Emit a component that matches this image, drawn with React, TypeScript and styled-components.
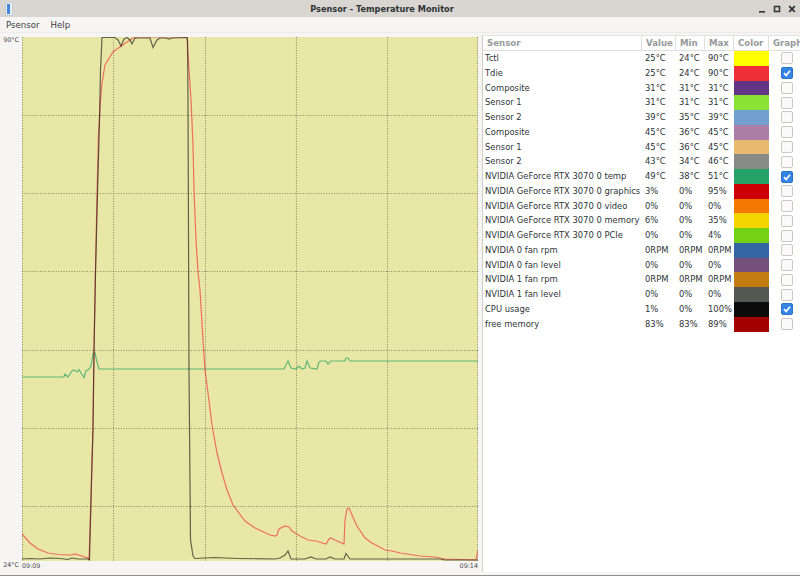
import React from "react";
import styled, { createGlobalStyle } from "styled-components";

const GlobalStyle = createGlobalStyle`
  html, body {
    margin: 0;
    padding: 0;
    background: #f6f5f4;
  }
  body {
    font-family: "DejaVu Sans", sans-serif;
    color: #2e3436;
    overflow: hidden;
  }
`;

interface Sensor {
  name: string;
  value: string;
  min: string;
  max: string;
  color: string;
  graph?: boolean;
}

const sensors: Sensor[] = [
  { name: "Tctl", value: "25°C", min: "24°C", max: "90°C", color: "#ffff00" },
  { name: "Tdie", value: "25°C", min: "24°C", max: "90°C", color: "#f03038", graph: true },
  { name: "Composite", value: "31°C", min: "31°C", max: "31°C", color: "#613583" },
  { name: "Sensor 1", value: "31°C", min: "31°C", max: "31°C", color: "#8ae234" },
  { name: "Sensor 2", value: "39°C", min: "35°C", max: "39°C", color: "#729fcf" },
  { name: "Composite", value: "45°C", min: "36°C", max: "45°C", color: "#ad7fa8" },
  { name: "Sensor 1", value: "45°C", min: "36°C", max: "45°C", color: "#e9b96e" },
  { name: "Sensor 2", value: "43°C", min: "34°C", max: "46°C", color: "#888a85" },
  { name: "NVIDIA GeForce RTX 3070 0 temp", value: "49°C", min: "38°C", max: "51°C", color: "#26a269", graph: true },
  { name: "NVIDIA GeForce RTX 3070 0 graphics", value: "3%", min: "0%", max: "95%", color: "#cc0000" },
  { name: "NVIDIA GeForce RTX 3070 0 video", value: "0%", min: "0%", max: "0%", color: "#f57900" },
  { name: "NVIDIA GeForce RTX 3070 0 memory", value: "6%", min: "0%", max: "35%", color: "#f5d400" },
  { name: "NVIDIA GeForce RTX 3070 0 PCIe", value: "0%", min: "0%", max: "4%", color: "#73d216" },
  { name: "NVIDIA 0 fan rpm", value: "0RPM", min: "0RPM", max: "0RPM", color: "#3465a4" },
  { name: "NVIDIA 0 fan level", value: "0%", min: "0%", max: "0%", color: "#75507b" },
  { name: "NVIDIA 1 fan rpm", value: "0RPM", min: "0RPM", max: "0RPM", color: "#c17d11" },
  { name: "NVIDIA 1 fan level", value: "0%", min: "0%", max: "0%", color: "#555753" },
  { name: "CPU usage", value: "1%", min: "0%", max: "100%", color: "#0b0b0b", graph: true },
  { name: "free memory", value: "83%", min: "83%", max: "89%", color: "#a40000" },
];

const verticals = [113, 205, 296, 387];
const horizontals = [115, 193, 271, 350, 428, 506];

const redTrace =
  "22,534 30,543 38,549 48,553 58,554.5 72,555 75,554 88,558 89,560 90,530 91.5,480 93,428 94,350 95.5,272 97,194 98.5,135 100.5,100 102,83 105,65 113,52 124,44 133,38 138,37 187,37 189,70 191,100 193,145 194,190 196,240 198,272 200,290 203,340 205,370 208,393 212,425 217,453 222,473 227,490 233,505 245,521 255,528 270,535 275,536 277,535 279,529 285,526 289,527 292,531 300,536 308,540 316,541 326,544 329,539 331,538 335,540 344,544 345,520 347,509 349,508 352,515 357,526 365,538 372,543 385,550 392,551 400,553 420,556 435,557 445,559 476,560 478,550";
const blackTrace =
  "22,559 30,558.5 40,559 50,558 60,558.5 68,559.5 72,558 78,559 88,559 89.5,560 91.5,480 93,428 94,350 95.5,272 97.5,194 99.5,120 100.5,70 102,37.5 115,37.5 118,40 121,46 124,39 127,37.5 130,40 132,44 135,38 150,38 153,47.5 157,40 160,38 166,38 169,39 172,38 187,37.5 187.5,40 188,100 189,370 190.5,540 193,556 195,558.5 205,558 215,557.5 225,558 240,558.5 275,559 280,558 285,555 288,551 291,559 305,559 311,557 316,559 326,559 330,557 335,559 344,559 346,553.5 350,559 380,559 400,559 440,559 445,560 478,560";
const greenTrace =
  "22,377 64,377 65,374 68,377 72,371 74,370 77,372 79,369.5 81,373 84,377.5 86,371 89,369 91,366 93,354 95,353 97,362 99,369 284,369 288,361 291,368 296,369 299,366 302,369 305,368 307,361 310,368 317,369 319,362 321,361 326,361 328,364 331,361 345,361 346,358 348,358 350,361 478,361";

const App = () => {
  return (
    <Win>
      <GlobalStyle />
      <TitleBar>
        <AppIcon width="8" height="14" viewBox="0 0 8 14">
          <rect x="0.5" y="0.5" width="7" height="13" fill="#e8eef6" stroke="#c4ccd6" />
          <rect x="2" y="2" width="3" height="10" fill="#3f86dc" />
        </AppIcon>
        <Title>Psensor - Temperature Monitor</Title>
        <WinButtons>
          <svg width="8" height="8" viewBox="0 0 8 8">
            <rect x="1" y="6" width="6" height="1.6" fill="#2e3436" />
          </svg>
          <svg width="8" height="8" viewBox="0 0 8 8">
            <rect x="1.5" y="1.5" width="5" height="5" fill="none" stroke="#2e3436" strokeWidth="1.5" />
          </svg>
          <svg width="8" height="8" viewBox="0 0 8 8">
            <path d="M1.2 1.2 L6.8 6.8 M6.8 1.2 L1.2 6.8" stroke="#2e3436" strokeWidth="1.7" />
          </svg>
        </WinButtons>
      </TitleBar>
      <MenuBar>
        <MenuItem>Psensor</MenuItem>
        <MenuItem>Help</MenuItem>
      </MenuBar>
      <Body>
        <GraphPane>
          <YAxis>
            <span>90°C</span>
            <span>24°C</span>
          </YAxis>
          <Plot viewBox="22 37 456 524" width="456" height="524">
            <rect x="22" y="37" width="456" height="524" fill="#e9e7a5" />
            {horizontals.map((y) => (
              <GridLine key={y} x1="22" x2="478" y1={y + 0.5} y2={y + 0.5} />
            ))}
            {[22, ...verticals, 477].map((x) => (
              <GridLine key={x} x1={x + 0.5} x2={x + 0.5} y1="37" y2="561" />
            ))}
            <Trace points={greenTrace} $color="#26a269" $opacity={0.7} />
            <Trace points={redTrace} $color="#f03038" $opacity={0.65} />
            <Trace points={blackTrace} $color="#1a1a1a" $opacity={0.65} />
          </Plot>
          <XAxis>
            <span>09:09</span>
            <span>09:14</span>
          </XAxis>
        </GraphPane>
        <Panel>
          <HeadRow>
            <HeadCell>Sensor</HeadCell>
            <HeadCell>Value</HeadCell>
            <HeadCell>Min</HeadCell>
            <HeadCell>Max</HeadCell>
            <HeadCell>Color</HeadCell>
            <HeadCell>Graph</HeadCell>
          </HeadRow>
          {sensors.map((s, i) => (
            <Row key={i}>
              <NameCell>{s.name}</NameCell>
              <ValueCell>{s.value}</ValueCell>
              <ValueCell>{s.min}</ValueCell>
              <ValueCell>{s.max}</ValueCell>
              <Swatch $color={s.color} />
              <CheckCell>
                <Check $on={s.graph}>
                  {s.graph && (
                    <svg width="10" height="10" viewBox="0 0 10 10">
                      <path d="M2 5.2 L4.2 7.4 L8 2.8" fill="none" stroke="#fff" strokeWidth="1.7" />
                    </svg>
                  )}
                </Check>
              </CheckCell>
            </Row>
          ))}
        </Panel>
      </Body>
    </Win>
  );
};

export default App;

const Win = styled.div`
  width: 800px;
  height: 576px;
  display: flex;
  flex-direction: column;
  overflow: hidden;
  background: #f6f5f4;
  border-bottom: 1px solid #8f8f8c;
  box-sizing: border-box;
`;

const TitleBar = styled.div`
  position: relative;
  height: 17px;
  flex: none;
  display: flex;
  align-items: center;
  justify-content: center;
  padding-right: 36px;
  background: #d9d5d1;
`;

const AppIcon = styled.svg`
  position: absolute;
  left: 5px;
  top: 2px;
`;

const Title = styled.div`
  font-size: 8.2px;
  font-weight: bold;
  color: #2e3436;
`;

const WinButtons = styled.div`
  position: absolute;
  right: 4px;
  top: 5px;
  display: flex;
  gap: 7px;

  svg {
    display: block;
  }
`;

const MenuBar = styled.div`
  height: 16px;
  flex: none;
  display: flex;
  align-items: center;
  gap: 11px;
  padding-left: 6px;
  font-size: 8.6px;
  border-bottom: 1px solid #ecebe9;
  box-sizing: border-box;
`;

const MenuItem = styled.span`
  color: #3b4042;
`;

const Body = styled.div`
  flex: 1;
  min-height: 0;
  display: flex;
`;

const GraphPane = styled.div`
  width: 482px;
  flex: none;
  padding-top: 4px;
  display: grid;
  grid-template-columns: 22px 456px;
  grid-template-rows: 524px 1fr;
  box-sizing: border-box;
`;

const YAxis = styled.div`
  display: flex;
  flex-direction: column;
  justify-content: space-between;
  align-items: flex-end;
  margin-top: -1px;
  padding: 0 3px 0 0;
  font-size: 6.4px;
  color: #4a4a4a;
  grid-row: 1 / span 2;
  height: 533px;

  span {
    display: block;
  }
`;

const Plot = styled.svg`
  display: block;
`;

const GridLine = styled.line`
  stroke: #55554a;
  stroke-opacity: 0.65;
  stroke-width: 1.1;
  stroke-dasharray: 1 1.6;
`;

const Trace = styled.polyline<{ $color: string; $opacity: number }>`
  fill: none;
  stroke: ${({ $color }) => $color};
  stroke-opacity: ${({ $opacity }) => $opacity};
  stroke-width: 1.2;
  filter: blur(0.25px);
`;

const XAxis = styled.div`
  display: flex;
  justify-content: space-between;
  padding-top: 1px;
  font-size: 6.4px;
  color: #4a4a4a;
`;

const Panel = styled.div`
  flex: 1;
  margin-top: 2px;
  margin-bottom: 3px;
  background: #fff;
  border-left: 1px solid #d0cfcc;
  border-top: 1px solid #e4e3e1;
  overflow: hidden;
`;

const columns = "159px 34px 29px 29px 35px 35px";

const HeadRow = styled.div`
  height: 15px;
  display: grid;
  grid-template-columns: ${columns};
  border-bottom: 1px solid #e0dfdd;
  box-sizing: border-box;
`;

const HeadCell = styled.div`
  padding-left: 4px;
  font-size: 8.6px;
  font-weight: bold;
  line-height: 14px;
  color: #979a9a;
  border-right: 1px solid #e0dfdd;
  white-space: nowrap;
  overflow: hidden;
`;

const Row = styled.div`
  height: 14.78px;
  display: grid;
  grid-template-columns: ${columns};
  font-size: 8.4px;
  line-height: 14.78px;
  white-space: nowrap;
`;

const NameCell = styled.div`
  padding-left: 2px;
  overflow: hidden;
`;

const ValueCell = styled.div`
  padding-left: 3px;
  overflow: hidden;
`;

const Swatch = styled.div<{ $color: string }>`
  background: ${({ $color }) => $color};
`;

const CheckCell = styled.div`
  display: flex;
  align-items: center;
  padding-left: 12px;
`;

const Check = styled.div<{ $on?: boolean }>`
  width: 10px;
  height: 10px;
  display: flex;
  align-items: center;
  justify-content: center;
  border: 1px solid ${({ $on }) => ($on ? "#2a76c6" : "#cdc7c2")};
  border-radius: 2px;
  background: ${({ $on }) => ($on ? "#3584e4" : "#fafafa")};
`;
